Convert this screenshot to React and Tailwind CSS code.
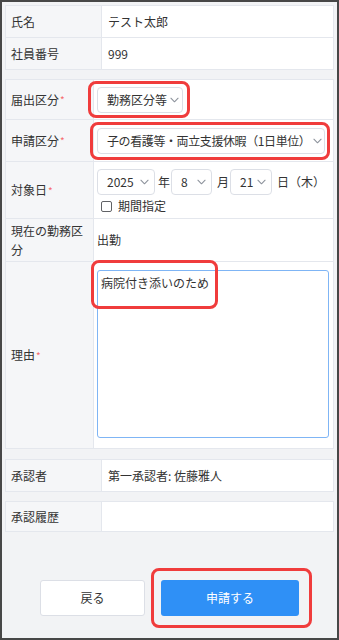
import React from "react";

const Chevron = ({ className = "" }) => (
  <svg viewBox="0 0 10 6" className={"w-[9px] h-[6px] shrink-0 " + className} fill="none">
    <polyline points="1,1 5,5 9,1" stroke="#8d939c" strokeWidth="1.2" strokeLinecap="round" strokeLinejoin="round" />
  </svg>
);

const Select = ({ value, className = "", textClass = "" }) => (
  <div className={"h-[26px] flex items-center justify-between bg-white border border-[#dcdfe6] rounded-[4px] pl-[9px] pr-[5px] " + className}>
    <span className={"whitespace-nowrap " + textClass}>{value}</span>
    <Chevron className="ml-[3px]" />
  </div>
);

const Mark = ({ className }) => (
  <div className={"absolute border-[3px] border-[#f03c3c] rounded-[8px] pointer-events-none " + className} />
);

const Req = () => <span className="text-[#f56c6c] text-[10px] align-top ml-[1px]">*</span>;

const App = () => {
  return (
    <div className="w-[339px] h-[640px] box-border border-2 border-[#474747] bg-[#f2f3f5] px-[3px] pt-[3px] flex flex-col text-[12px] text-[#333] font-['Noto_Sans_CJK_JP',sans-serif]">
      <div className="border border-[#e4e7ed] bg-white">
        <div className="grid grid-cols-[96px_1fr] h-[32px] border-b border-[#e4e7ed]">
          <div className="bg-[#f5f6f8] border-r border-[#e4e7ed] flex items-center pl-[5px]">氏名</div>
          <div className="flex items-center pl-[6px]">テスト太郎</div>
        </div>
        <div className="grid grid-cols-[96px_1fr] h-[31px]">
          <div className="bg-[#f5f6f8] border-r border-[#e4e7ed] flex items-center pl-[5px]">社員番号</div>
          <div className="flex items-center pl-[6px]">999</div>
        </div>
      </div>

      <div className="mt-[9px] border border-[#e4e7ed] bg-white">
        <div className="grid grid-cols-[88px_1fr] h-[40px] border-b border-[#e4e7ed]">
          <div className="bg-[#f5f6f8] border-r border-[#e4e7ed] flex items-center pl-[5px]">届出区分<Req /></div>
          <div className="flex items-center pl-[3px]">
            <div className="relative">
              <Select value="勤務区分等" className="w-[86px] pl-[8px]" />
              <Mark className="-left-[9px] -right-[7px] -top-[6px] -bottom-[5px]" />
            </div>
          </div>
        </div>
        <div className="grid grid-cols-[88px_1fr] h-[42px] border-b border-[#e4e7ed]">
          <div className="bg-[#f5f6f8] border-r border-[#e4e7ed] flex items-center pl-[5px]">申請区分<Req /></div>
          <div className="flex items-center pl-[3px] pr-[8px] min-w-0">
            <div className="relative flex-1 min-w-0">
              <Select value="子の看護等・両立支援休暇（1日単位）" className="w-full pl-[6px]" textClass="tracking-[-0.4px]" />
              <Mark className="-left-[7px] -right-[5px] -top-[6px] -bottom-[6px]" />
            </div>
          </div>
        </div>
        <div className="grid grid-cols-[88px_1fr] h-[57px] border-b border-[#e4e7ed]">
          <div className="bg-[#f5f6f8] border-r border-[#e4e7ed] flex items-center pl-[5px]">対象日<Req /></div>
          <div className="flex flex-col pl-[3px] pt-[7px]">
            <div className="flex items-center">
              <Select value="2025" className="w-[58px]" />
              <span className="ml-[3px] mr-[1px]">年</span>
              <Select value="8" className="w-[41px]" />
              <span className="ml-[5px] mr-[1px]">月</span>
              <Select value="21" className="w-[42px]" />
              <span className="ml-[5px]">日</span>
              <span>（木）</span>
            </div>
            <div className="flex items-center mt-[3px] pl-[4px]">
              <span className="w-[11px] h-[11px] border border-[#606266] rounded-[2px] bg-white" />
              <span className="ml-[6px] leading-[16px]">期間指定</span>
            </div>
          </div>
        </div>
        <div className="grid grid-cols-[88px_1fr] h-[43px] border-b border-[#e4e7ed]">
          <div className="bg-[#f5f6f8] border-r border-[#e4e7ed] flex items-center pl-[5px] pr-[4px] leading-[19px]">現在の勤務区分</div>
          <div className="flex items-center pl-[3px]">出勤</div>
        </div>
        <div className="grid grid-cols-[88px_1fr] h-[186px]">
          <div className="bg-[#f5f6f8] border-r border-[#e4e7ed] flex items-center pl-[5px]">理由<Req /></div>
          <div className="pl-[3px] pr-[4px] pt-[8px] pb-[10px] flex">
            <div className="relative flex-1 border border-[#7fb5f5] rounded-[3px] bg-white px-[3px] pt-[3px]">
              <span className="relative">
                病院付き添いのため
                <Mark className="-left-[10px] -right-[9px] -top-[14px] -bottom-[18px]" />
              </span>
            </div>
          </div>
        </div>
      </div>

      <div className="mt-[10px] border border-[#e4e7ed] bg-white">
        <div className="grid grid-cols-[96px_1fr] h-[31px]">
          <div className="bg-[#f5f6f8] border-r border-[#e4e7ed] flex items-center pl-[5px]">承認者</div>
          <div className="flex items-center pl-[6px]">第一承認者: 佐藤雅人</div>
        </div>
      </div>

      <div className="mt-[9px] border border-[#e4e7ed] bg-white">
        <div className="grid grid-cols-[96px_1fr] h-[29px]">
          <div className="bg-[#f5f6f8] border-r border-[#e4e7ed] flex items-center pl-[5px]">承認履歴</div>
          <div />
        </div>
      </div>

      <div className="mt-[48px] flex justify-center gap-[16px]">
        <button className="w-[105px] h-[36px] bg-white border border-[#dcdfe6] rounded-[3px] text-[12px] text-[#333]">戻る</button>
        <div className="relative">
          <button className="w-[138px] h-[36px] bg-[#2f90f6] rounded-[3px] text-[12px] text-white">申請する</button>
          <Mark className="-left-[10px] -right-[13px] -top-[12px] -bottom-[12px]" />
        </div>
      </div>
    </div>
  );
};

export default App;
